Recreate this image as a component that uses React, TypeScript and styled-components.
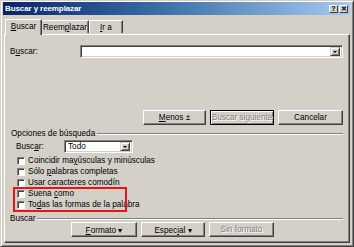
import React from "react";
import styled, { createGlobalStyle } from "styled-components";

const Global = createGlobalStyle`
  html, body { margin: 0; padding: 0; background: #d4d0c8; }
  body { font-family: "Liberation Sans Narrow", "Liberation Sans", Arial, sans-serif; }
`;

const Window = styled.div`
  width: 354px;
  height: 247px;
  box-sizing: border-box;
  background: #d4d0c8;
  border: 1px solid;
  border-color: #d4d0c8 #404040 #404040 #d4d0c8;
  box-shadow: inset 1px 1px #ffffff, inset -1px -1px #808080;
  padding: 1px 3px 3px 2px;
  display: flex;
  flex-direction: column;
  font-size: 8.2px;
  color: #000;
`;

const TitleBar = styled.div`
  height: 13px;
  flex: none;
  display: flex;
  align-items: center;
  padding: 0 2px 0 2px;
  background: linear-gradient(to right, #0a246a 0%, #3a6ea5 45%, #a6caf0 100%);
`;

const Title = styled.div`
  flex: 1;
  color: #fff;
  font-family: "Liberation Sans", Arial, sans-serif;
  font-weight: bold;
  font-size: 8px;
  letter-spacing: -0.1px;
`;

const CapButton = styled.div<{ $gap?: boolean }>`
  width: 9px;
  height: 8px;
  box-sizing: border-box;
  background: #d4d0c8;
  border: 1px solid;
  border-color: #ffffff #404040 #404040 #ffffff;
  display: flex;
  align-items: center;
  justify-content: center;
  font-family: "Liberation Sans", Arial, sans-serif;
  font-weight: bold;
  font-size: 7px;
  line-height: 1;
  margin-left: ${(p) => (p.$gap ? "1px" : "0")};
`;

const Body = styled.div`
  flex: 1;
  display: flex;
  flex-direction: column;
  padding: 4px 0 0 1px;
`;

const TabStrip = styled.div`
  display: flex;
  align-items: flex-end;
  height: 16px;
  padding-left: 1px;
  position: relative;
  z-index: 1;
`;

const Tab = styled.div<{ $active?: boolean; $w: number }>`
  width: ${(p) => p.$w}px;
  box-sizing: border-box;
  height: ${(p) => (p.$active ? 16 : 13)}px;
  margin: ${(p) => (p.$active ? "0 -1px 0 0" : "0 0 2px 0")};
  background: #d4d0c8;
  border-top: 1px solid #ffffff;
  border-left: 1px solid #ffffff;
  border-right: 1px solid #404040;
  box-shadow: inset -1px 0 #808080;
  border-radius: 1px 1px 0 0;
  display: flex;
  align-items: center;
  justify-content: center;
  padding-bottom: ${(p) => (p.$active ? 3 : 0)}px;
  position: relative;
  z-index: ${(p) => (p.$active ? 2 : 1)};
`;

const Panel = styled.div`
  flex: 1;
  margin-top: -1px;
  box-sizing: border-box;
  border: 1px solid;
  border-color: #ffffff #404040 #404040 #ffffff;
  box-shadow: inset -1px -1px #808080;
  display: flex;
  flex-direction: column;
  padding: 0 5px 0 5px;
`;

const FindRow = styled.div`
  display: flex;
  align-items: center;
  margin-top: 10px;
  height: 13px;
`;

const Label = styled.div<{ $w: number; $pl?: number }>`
  width: ${(p) => p.$w}px;
  padding-left: ${(p) => p.$pl ?? 0}px;
  box-sizing: border-box;
  white-space: nowrap;
`;

const Combo = styled.div<{ $w?: number }>`
  ${(p) => (p.$w ? `width: ${p.$w}px;` : "flex: 1;")}
  height: 13px;
  box-sizing: border-box;
  background: #fff;
  border: 1px solid;
  border-color: #808080 #ffffff #ffffff #808080;
  box-shadow: inset 1px 1px #404040, inset -1px -1px #d4d0c8;
  display: flex;
  align-items: center;
  padding: 2px 2px 2px 3px;
  margin-right: 1px;
`;

const ComboText = styled.div`
  flex: 1;
  white-space: nowrap;
`;

const DropBtn = styled.div`
  width: 10px;
  height: 9px;
  box-sizing: border-box;
  background: #d4d0c8;
  border: 1px solid;
  border-color: #d4d0c8 #404040 #404040 #d4d0c8;
  box-shadow: inset 1px 1px #fff, inset -1px -1px #808080;
  display: flex;
  align-items: center;
  justify-content: center;
`;

const Arrow = styled.div`
  width: 0;
  height: 0;
  border-left: 2px solid transparent;
  border-right: 2px solid transparent;
  border-top: 2px solid #000;
`;

const ButtonRow = styled.div<{ $mt: number; $pl?: number }>`
  display: flex;
  margin-top: ${(p) => p.$mt}px;
  padding-left: ${(p) => p.$pl ?? 0}px;
  justify-content: ${(p) => (p.$pl ? "flex-start" : "flex-end")};
  gap: 4px;
  padding-right: 1px;
`;

const Btn = styled.div<{ $w: number; $disabled?: boolean; $default?: boolean }>`
  width: ${(p) => p.$w}px;
  height: 15px;
  box-sizing: border-box;
  background: #d4d0c8;
  border: 1px solid;
  border-color: ${(p) => (p.$default ? "#000" : "#ffffff #404040 #404040 #ffffff")};
  box-shadow: ${(p) =>
    p.$default ? "inset 1px 1px #fff, inset -1px -1px #808080" : "inset -1px -1px #808080"};
  display: flex;
  align-items: center;
  justify-content: center;
  white-space: nowrap;
  color: ${(p) => (p.$disabled ? "#808080" : "#000")};
  text-shadow: ${(p) => (p.$disabled ? "1px 1px #ffffff" : "none")};
`;

const GroupHead = styled.div<{ $mt: number; $pl: number; $h: number }>`
  display: flex;
  align-items: center;
  margin-top: ${(p) => p.$mt}px;
  padding-left: ${(p) => p.$pl}px;
  height: ${(p) => p.$h}px;
  gap: 2px;
  padding-right: 1px;
`;

const Etch = styled.div`
  flex: 1;
  height: 1px;
  background: #808080;
  border-bottom: 1px solid #ffffff;
`;

const SelectRow = styled.div`
  display: flex;
  align-items: center;
  margin-top: 2px;
  height: 13px;
`;

const Checks = styled.div`
  display: flex;
  flex-direction: column;
  margin-top: 2px;
  padding-left: 7px;
`;

const CheckRow = styled.div`
  display: flex;
  align-items: center;
  height: 11px;
  gap: 3px;
  white-space: nowrap;
`;

const Box = styled.div`
  width: 8px;
  height: 8px;
  box-sizing: border-box;
  background: #fff;
  border: 1px solid;
  border-color: #808080 #ffffff #ffffff #808080;
  box-shadow: inset 1px 1px #404040;
  flex: none;
`;

/* red annotation rectangle drawn over the two rows */
const Highlight = styled.div`
  position: relative;
  display: flex;
  flex-direction: column;
  &::after {
    content: "";
    position: absolute;
    left: -4px;
    top: -1px;
    width: 114px;
    height: 25px;
    box-sizing: border-box;
    border: 2px solid #e8141c;
    pointer-events: none;
  }
`;

const Check: React.FC<{ children: React.ReactNode }> = ({ children }) => (
  <CheckRow>
    <Box />
    <span>{children}</span>
  </CheckRow>
);

export default function App() {
  return (
    <>
      <Global />
      <Window>
        <TitleBar>
          <Title>Buscar y reemplazar</Title>
          <CapButton>?</CapButton>
          <CapButton $gap>✕</CapButton>
        </TitleBar>
        <Body>
          <TabStrip>
            <Tab $active $w={37}>
              <span>
                <u>B</u>uscar
              </span>
            </Tab>
            <Tab $w={48}>
              <span>
                Reem<u>p</u>lazar
              </span>
            </Tab>
            <Tab $w={34}>
              <span>
                <u>I</u>r a
              </span>
            </Tab>
          </TabStrip>
          <Panel>
            <FindRow>
              <Label $w={70}>
                B<u>u</u>scar:
              </Label>
              <Combo>
                <ComboText />
                <DropBtn>
                  <Arrow />
                </DropBtn>
              </Combo>
            </FindRow>
            <ButtonRow $mt={52}>
              <Btn $w={63}>
                <span>
                  <u>M</u>enos ±
                </span>
              </Btn>
              <Btn $w={64} $disabled $default>
                Buscar siguiente
              </Btn>
              <Btn $w={65}>Cancelar</Btn>
            </ButtonRow>
            <GroupHead $mt={4} $pl={1} $h={9}>
              <span>Opciones de búsqueda</span>
              <Etch />
            </GroupHead>
            <SelectRow>
              <Label $w={54} $pl={6}>
                Busc<u>a</u>r:
              </Label>
              <Combo $w={69}>
                <ComboText>Todo</ComboText>
                <DropBtn>
                  <Arrow />
                </DropBtn>
              </Combo>
            </SelectRow>
            <Checks>
              <Check>
                Coincidir ma<u>y</u>úsculas y minúsculas
              </Check>
              <Check>
                Sólo <u>p</u>alabras completas
              </Check>
              <Check>Usar caracteres comodín</Check>
              <Highlight>
                <Check>
                  Suena <u>c</u>omo
                </Check>
                <Check>
                  To<u>d</u>as las formas de la palabra
                </Check>
              </Highlight>
            </Checks>
            <GroupHead $mt={5} $pl={0} $h={7}>
              <span>Buscar</span>
              <Etch />
            </GroupHead>
            <ButtonRow $mt={0} $pl={61}>
              <Btn $w={66}>
                <span>
                  <u>F</u>ormato ▾
                </span>
              </Btn>
              <Btn $w={64}>
                <span>
                  Espec<u>i</u>al ▾
                </span>
              </Btn>
              <Btn $w={65} $disabled>
                Sin formato
              </Btn>
            </ButtonRow>
          </Panel>
        </Body>
      </Window>
    </>
  );
}
